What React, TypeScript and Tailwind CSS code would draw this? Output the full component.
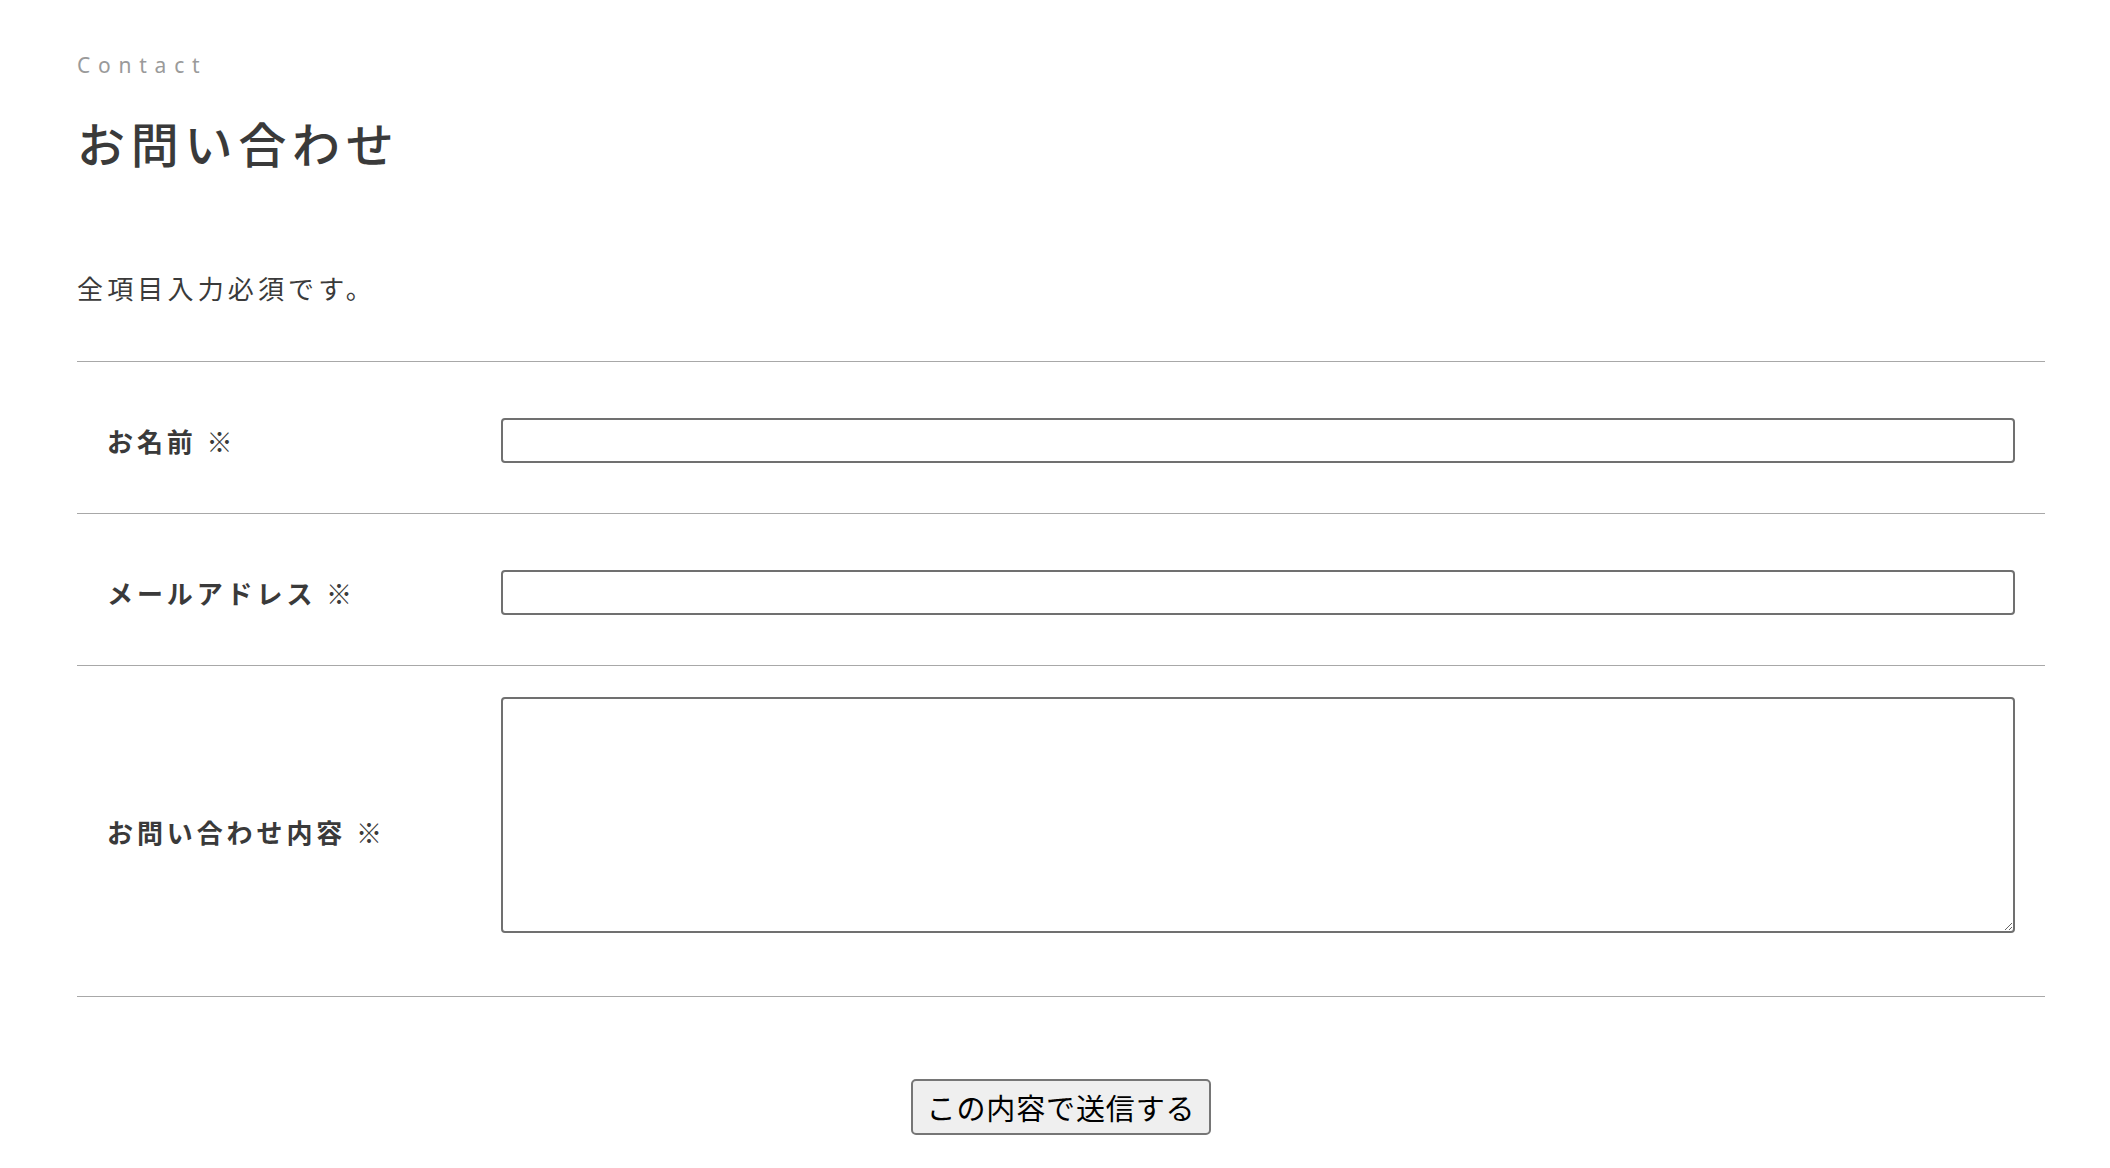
import React from "react";

const jp = "font-['Noto_Sans_CJK_JP','Noto_Sans',sans-serif]";

function Row({
  label,
  children,
  textarea = false,
}: {
  label: string;
  children: React.ReactNode;
  textarea?: boolean;
}) {
  return (
    <div className="flex border-b border-[#a8a8a8]">
      <div
        className={`w-[424px] shrink-0 pl-[30px] flex items-center ${
          textarea ? "" : "pt-[6px]"
        }`}
      >
        <span className="text-[26px] leading-[1.5] font-bold tracking-[0.15em] text-[#3a3a3a]">
          {label}
        </span>
      </div>
      <div
        className={`flex-1 pr-[30px] ${
          textarea ? "pt-[31px] pb-[63px]" : "pt-[56px] pb-[50px]"
        }`}
      >
        {children}
      </div>
    </div>
  );
}

export default function App() {
  return (
    <div className={`min-h-[1168px] bg-white pl-[77px] pr-[65px] pt-[50px] ${jp}`}>
      <p className="font-['Noto_Sans',sans-serif] text-[21px] leading-[30px] tracking-[0.37em] text-[#9a9a9a]">
        Contact
      </p>
      <h1 className="mt-[26px] text-[48px] leading-[72px] font-medium tracking-[0.12em] text-[#3a3a3a]">
        お問い合わせ
      </h1>
      <p className="mt-[90px] text-[26px] leading-[39px] tracking-[0.16em] text-[#3a3a3a]">
        全項目入力必須です。
      </p>

      <form
        className="mt-[54px] border-t border-[#a8a8a8]"
        onSubmit={(e) => e.preventDefault()}
      >
        <Row label="お名前 ※">
          <input
            type="text"
            className="block w-full h-[45px] border-2 border-[#707070] rounded-[4px] bg-white px-2 text-[22px] outline-none"
          />
        </Row>
        <Row label="メールアドレス ※">
          <input
            type="email"
            className="block w-full h-[45px] border-2 border-[#707070] rounded-[4px] bg-white px-2 text-[22px] outline-none"
          />
        </Row>
        <Row label="お問い合わせ内容 ※" textarea>
          <textarea className="block w-full h-[236px] border-2 border-[#707070] rounded-[4px] bg-white p-2 text-[22px] outline-none" />
        </Row>

        <div className="flex justify-center pt-[82px]">
          <button
            type="submit"
            className="w-[300px] h-[56px] border-2 border-[#767676] rounded-[5px] bg-[#efefef] text-[29px] leading-none tracking-[0.03em] text-black"
          >
            この内容で送信する
          </button>
        </div>
      </form>
    </div>
  );
}
